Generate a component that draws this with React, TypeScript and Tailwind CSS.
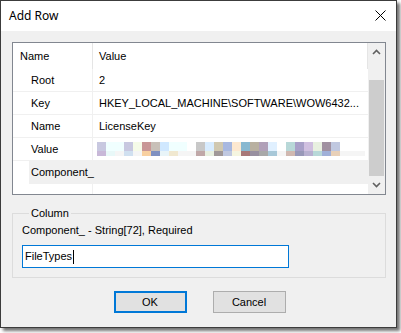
const topPixels = [
  '#c8c8e0', '#f0ffff', '#f0ffff', '#c8c8e0', '#f5fbe8', '#c89696', '#c8c0b8', '#d0e8ff', '#f0ffff',
  '#f0ffff', '#ffffff', '#c8c8c8', '#d8ecff', '#d0c8b0', '#a8b8e0', '#fde8d0', '#88b8d0', '#b8b0a0',
  '#b0a0b8', '#e0f0ff', '#ffffff', '#b8d8d8', '#a8a0c8', '#d0c0e0', '#e8f0e0', '#a090a0', '#c0c8e0'
]
const bottomPixels = [
  '#c8b8d8', '#e8f8f8', '#f5f5f5', '#d0e0f0', '#f5f5f5', '#f8d0a0', '#8090c0', '#e8f4f8', '#f0e8d0',
  '#f5f5f5', '#f5f5f5', '#c0a8a8', '#e8f0e0', '#a09898', '#c0c8e0', '#f5f5e0', '#a87878', '#9890a0',
  '#a8a8a8', '#a8c8d8', '#f5f5f5', '#d0b8b0', '#9898b8', '#b8b0d0', '#b8d8d8', '#a0b0d8', '#e8d0b8'
]

const rows = [
  { name: 'Root', value: '2' },
  { name: 'Key', value: 'HKEY_LOCAL_MACHINE\\SOFTWARE\\WOW6432...' },
  { name: 'Name', value: 'LicenseKey' }
]

function BlurredValue() {
  return (
    <div className="ml-[4px] flex w-[268px] flex-col bg-[#f5f5f5]">
      <div className="flex h-[9px] bg-white">
        {topPixels.map((c, i) => (
          <div key={i} className="h-full w-[9px]" style={{ background: c }} />
        ))}
      </div>
      <div className="flex h-[5px]">
        {bottomPixels.map((c, i) => (
          <div key={i} className="h-full w-[9px]" style={{ background: c }} />
        ))}
      </div>
    </div>
  )
}

function Chevron({ up }: { up?: boolean }) {
  return (
    <svg width="9" height="6" viewBox="0 0 9 6" className={up ? '' : 'rotate-180'}>
      <path d="M1 5 L4.5 1.5 L8 5" fill="none" stroke="#606060" strokeWidth="1.6" />
    </svg>
  )
}

function App() {
  return (
    <div className="h-[333px] w-[401px] bg-white text-[11px] text-black [font-family:'Liberation_Sans',Arial,sans-serif]">
      <div className="flex h-[328px] w-[397px] flex-col border border-[#3c3c3c] bg-[#f0f0f0] shadow-[3px_3px_3px_rgba(0,0,0,0.55)]">
        <div className="flex h-[30px] items-center justify-between bg-white pb-[1px] pl-[8px] pr-[10px]">
          <span className="text-[12px] [font-family:'Noto_Sans',sans-serif]">Add Row</span>
          <svg width="11" height="11" viewBox="0 0 11 11">
            <path d="M0.5 0.5 L10.5 10.5 M10.5 0.5 L0.5 10.5" stroke="#000" strokeWidth="1" />
          </svg>
        </div>

        <div className="flex flex-col pl-[11px] pr-[10px] pt-[11px]">
          <div className="flex h-[153px] border border-[#828790] bg-white">
            <div className="flex flex-1 flex-col overflow-hidden">
              <div className="flex h-[26px] shrink-0 items-center">
                <div className="flex h-full w-[80px] items-center border-r border-[#e5e5e5] pl-[7px]">Name</div>
                <div className="flex h-full flex-1 items-center border-r border-[#e5e5e5] pl-[6px]">Value</div>
              </div>
              {rows.map((r) => (
                <div key={r.name} className="flex h-[23px] shrink-0 border-b border-[#f0f0f0]">
                  <div className="flex w-[80px] items-center border-r border-[#f0f0f0] pl-[18px]">{r.name}</div>
                  <div className="flex flex-1 items-center pl-[6px]">{r.value}</div>
                </div>
              ))}
              <div className="flex h-[23px] shrink-0 border-b border-[#f0f0f0]">
                <div className="flex w-[80px] items-center border-r border-[#f0f0f0] pl-[18px]">Value</div>
                <div className="flex flex-1 items-center">
                  <BlurredValue />
                </div>
              </div>
              <div className="flex h-[23px] shrink-0 pl-[16px]">
                <div className="flex flex-1 items-center bg-[#f0f0f0] pl-[2px]">Component_</div>
              </div>
              <div className="flex flex-1">
                <div className="w-[80px] border-r border-[#f0f0f0]" />
              </div>
            </div>
            <div className="flex w-[17px] shrink-0 flex-col bg-[#f0f0f0]">
              <div className="flex h-[17px] items-center justify-center">
                <Chevron up />
              </div>
              <div className="h-[20px]" />
              <div className="mx-[1px] h-[96px] bg-[#cdcdcd]" />
              <div className="flex flex-1 items-center justify-center">
                <Chevron />
              </div>
            </div>
          </div>

          <fieldset className="mt-[12px] border border-[#dcdcdc] pb-[9px] pl-[9px]">
            <legend className="ml-[7px] px-[2px] leading-[13px]">Column</legend>
            <div className="pt-[4px] leading-[13px]">Component_ - String[72], Required</div>
            <div className="mt-[8px] flex h-[23px] w-[267px] items-center border border-[#0078d7] bg-white pl-[2px]">
              <span>FileTypes</span>
              <span className="ml-[1px] h-[14px] w-[1px] bg-black" />
            </div>
          </fieldset>

          <div className="mt-[13px] flex justify-center gap-[26px] pl-[1px]">
            <button className="flex h-[22px] w-[73px] items-center justify-center border-2 border-[#0078d7] bg-[#e1e1e1]">
              OK
            </button>
            <button className="flex h-[22px] w-[73px] items-center justify-center border border-[#adadad] bg-[#e1e1e1]">
              Cancel
            </button>
          </div>
        </div>
      </div>
    </div>
  )
}

export default App
